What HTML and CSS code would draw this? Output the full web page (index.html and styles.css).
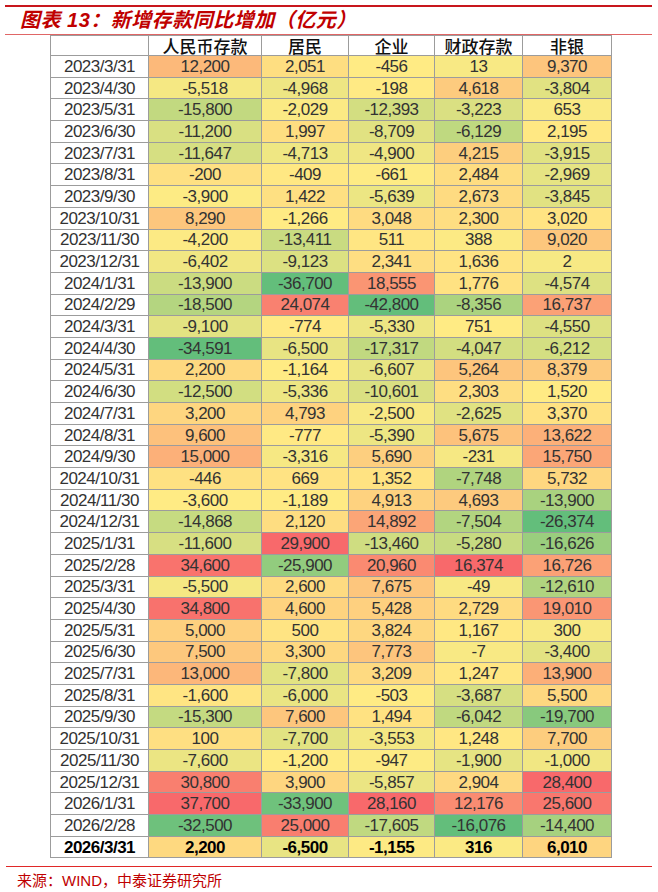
FILE: index.html
```html
<!DOCTYPE html>
<html lang="zh-CN">

<head>
    <meta charset="UTF-8" />
    <meta name="viewport" content="width=device-width, initial-scale=1.0" />
    <title>图表 13：新增存款同比增加（亿元）</title>
    <link rel="stylesheet" href="styles.css">
</head>

<body>
    <div class="page">
        <div class="top-rule"></div>
        <h1 class="title">图表 13：新增存款同比增加（亿元）</h1>

        <table class="heatmap">
            <colgroup>
                <col class="c-date">
                <col class="c-rmb">
                <col class="c-hh">
                <col class="c-corp">
                <col class="c-fiscal">
                <col class="c-nonbank">
            </colgroup>
            <thead>
                <tr>
                    <th></th>
                    <th>人民币存款</th>
                    <th>居民</th>
                    <th>企业</th>
                    <th>财政存款</th>
                    <th>非银</th>
                </tr>
            </thead>
            <tbody id="tabela">
                <!-- linhas geradas via JS -->
            </tbody>
        </table>

        <div class="bottom-rule"></div>
        <p class="source">来源：WIND，中泰证券研究所</p>
    </div>

    <script>
        const dados = [
            ["2023/3/31", 12200, 2051, -456, 13, 9370],
            ["2023/4/30", -5518, -4968, -198, 4618, -3804],
            ["2023/5/31", -15800, -2029, -12393, -3223, 653],
            ["2023/6/30", -11200, 1997, -8709, -6129, 2195],
            ["2023/7/31", -11647, -4713, -4900, 4215, -3915],
            ["2023/8/31", -200, -409, -661, 2484, -2969],
            ["2023/9/30", -3900, 1422, -5639, 2673, -3845],
            ["2023/10/31", 8290, -1266, 3048, 2300, 3020],
            ["2023/11/30", -4200, -13411, 511, 388, 9020],
            ["2023/12/31", -6402, -9123, 2341, 1636, 2],
            ["2024/1/31", -13900, -36700, 18555, 1776, -4574],
            ["2024/2/29", -18500, 24074, -42800, -8356, 16737],
            ["2024/3/31", -9100, -774, -5330, 751, -4550],
            ["2024/4/30", -34591, -6500, -17317, -4047, -6212],
            ["2024/5/31", 2200, -1164, -6607, 5264, 8379],
            ["2024/6/30", -12500, -5336, -10601, 2303, 1520],
            ["2024/7/31", 3200, 4793, -2500, -2625, 3370],
            ["2024/8/31", 9600, -777, -5390, 5675, 13622],
            ["2024/9/30", 15000, -3316, 5690, -231, 15750],
            ["2024/10/31", -446, 669, 1352, -7748, 5732],
            ["2024/11/30", -3600, -1189, 4913, 4693, -13900],
            ["2024/12/31", -14868, 2120, 14892, -7504, -26374],
            ["2025/1/31", -11600, 29900, -13460, -5280, -16626],
            ["2025/2/28", 34600, -25900, 20960, 16374, 16726],
            ["2025/3/31", -5500, 2600, 7675, -49, -12610],
            ["2025/4/30", 34800, 4600, 5428, 2729, 19010],
            ["2025/5/31", 5000, 500, 3824, 1167, 300],
            ["2025/6/30", 7500, 3300, 7773, -7, -3400],
            ["2025/7/31", 13000, -7800, 3209, 1247, 13900],
            ["2025/8/31", -1600, -6000, -503, -3687, 5500],
            ["2025/9/30", -15300, 7600, 1494, -6042, -19700],
            ["2025/10/31", 100, -7700, -3553, 1248, 7700],
            ["2025/11/30", -7600, -1200, -947, -1900, -1000],
            ["2025/12/31", 30800, 3900, -5857, 2904, 28400],
            ["2026/1/31", 37700, -33900, 28160, 12176, 25600],
            ["2026/2/28", -32500, 25000, -17605, -16076, -14400],
            ["2026/3/31", 2200, -6500, -1155, 316, 6010]
        ];

        // escala de 3 cores: verde (min) -> amarelo (mediana) -> vermelho (max)
        const verde = [99, 190, 123];
        const amarelo = [255, 235, 132];
        const vermelho = [248, 105, 107];

        function mistura(a, b, t) {
            return a.map((v, i) => Math.round(v + (b[i] - v) * t));
        }

        function escala(coluna) {
            const ord = coluna.slice().sort((a, b) => a - b);
            const min = ord[0];
            const max = ord[ord.length - 1];
            const pos = (ord.length - 1) / 2;
            const mid = ord[Math.floor(pos)] + (ord[Math.ceil(pos)] - ord[Math.floor(pos)]) * (pos - Math.floor(pos));
            return v => {
                let rgb;
                if (v <= mid) rgb = mistura(verde, amarelo, (v - min) / (mid - min));
                else rgb = mistura(amarelo, vermelho, (v - mid) / (max - mid));
                return `rgb(${rgb.join(",")})`;
            };
        }

        const escalas = [1, 2, 3, 4, 5].map(i => escala(dados.map(l => l[i])));
        const tabela = document.getElementById("tabela");

        dados.forEach((linha, idx) => {
            const tr = document.createElement("tr");
            if (idx === dados.length - 1) tr.className = "destaque";

            const tdData = document.createElement("td");
            tdData.className = "data";
            tdData.textContent = linha[0];
            tr.appendChild(tdData);

            for (let i = 1; i <= 5; i++) {
                const td = document.createElement("td");
                td.textContent = linha[i].toLocaleString("en-US");
                td.style.background = escalas[i - 1](linha[i]);
                tr.appendChild(td);
            }
            tabela.appendChild(tr);
        });
    </script>
</body>

</html>
```

FILE: styles.css
```css
body {
    margin: 0;
    background: #fff;
    font-family: "Liberation Sans", Arial, "Noto Sans CJK SC", sans-serif;
}

.page {
    width: 647px;
    padding: 5px 0 0 5px;
}

.top-rule {
    height: 2px;
    background: #c8161d;
}

.title {
    margin: 0;
    height: 27px;
    padding-left: 15px;
    border-bottom: 1px solid #e06666;
    font: italic bold 20px/27px "Liberation Sans", "Noto Sans CJK SC", sans-serif;
    letter-spacing: 0.5px;
    color: #c00000;
}

.heatmap {
    margin-left: 45px;
    border-collapse: collapse;
    table-layout: fixed;
    width: 561px;
}

.c-date {
    width: 98px;
}

.c-rmb {
    width: 113px;
}

.c-hh {
    width: 87px;
}

.c-corp {
    width: 86px;
}

.c-fiscal {
    width: 88px;
}

.c-nonbank {
    width: 89px;
}

.heatmap th,
.heatmap td {
    border: 1px solid #9c9c9c;
    padding: 0;
    text-align: center;
    white-space: nowrap;
}

.heatmap th {
    height: 19px;
    font: 500 17px/19px "Noto Sans CJK SC", sans-serif;
    color: #111;
}

.heatmap tbody tr {
    height: 21.7px;
}

.heatmap td {
    font-size: 17px;
    line-height: 1;
    color: #333;
    letter-spacing: -0.5px;
}

.heatmap td.data {
    background: #fff;
}

.heatmap tr.destaque td {
    font-weight: bold;
    color: #000;
}

.bottom-rule {
    margin: 8px 0 0 1px;
    height: 1px;
    background: #e02828;
}

.source {
    margin: 2px 0 0 12px;
    font: 15px "Liberation Sans", "Noto Sans CJK SC", sans-serif;
    color: #c00000;
}
```
